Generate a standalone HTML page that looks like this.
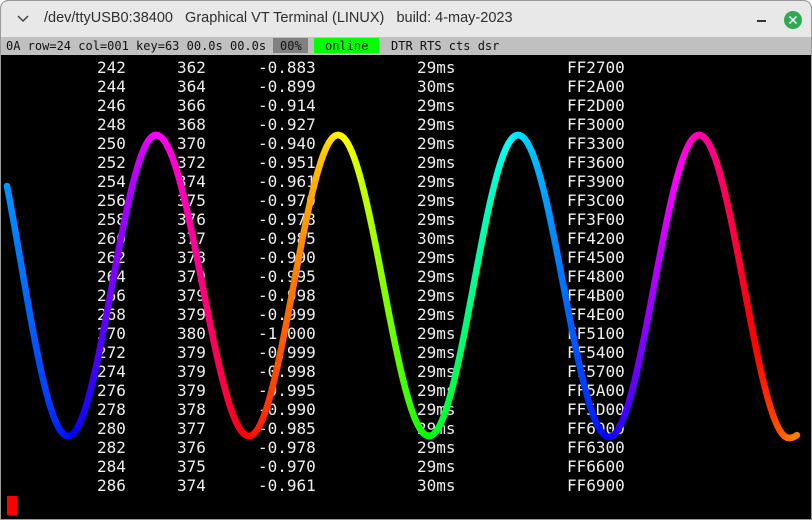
<!DOCTYPE html>
<html><head><style>
*{margin:0;padding:0;box-sizing:border-box}
body{width:812px;height:520px;overflow:hidden;background:#fff;position:relative;font-family:"Liberation Sans",sans-serif}
#win{position:absolute;left:0;top:0;width:812px;height:520px;border:1px solid #9a9a9a;border-radius:8px 8px 0 0;overflow:hidden;background:#000}
#title{position:absolute;left:0;top:0;width:812px;height:36px;background:#e8e8e8}
#title .t{position:absolute;left:43px;top:9px;font-size:14.5px;color:#2e2e2e;white-space:pre}
#status{position:absolute;left:0;top:36px;width:812px;height:18px;background:#c0c0c0;font:12px "DejaVu Sans Mono",monospace;color:#111;white-space:pre}
#status span{position:absolute;top:2px}
#term{position:absolute;left:0;top:54px;width:812px;height:466px;background:#000}
.row{position:absolute;left:0;height:19px;font:16px "DejaVu Sans Mono",monospace;color:#eee;white-space:pre;margin-top:-1px}
.row span{position:absolute;top:0}
</style></head><body>
<div id="win">
<div id="title">
<svg style="position:absolute;left:16px;top:14px" width="12" height="8"><path d="M1 1 L6 6 L11 1" stroke="#444" stroke-width="1.5" fill="none"/></svg>
<div class="t">/dev/ttyUSB0:38400   Graphical VT Terminal (LINUX)   build: 4-may-2023</div>
<div style="position:absolute;left:756px;top:19px;width:9px;height:2px;background:#333"></div>
<svg style="position:absolute;left:782px;top:9px" width="20" height="20"><circle cx="10" cy="10" r="9" fill="#2fa952"/><path d="M6.5 6.5L13.5 13.5M13.5 6.5L6.5 13.5" stroke="#fff" stroke-width="1.5"/></svg>
</div>
<div id="status">
<span style="left:5px">0A row=24 col=001 key=63 00.0s 00.0s</span>
<span style="left:272px;top:1px;width:35px;height:15px;background:#808080"></span>
<span style="left:279px">00%</span>
<span style="left:313px;top:1px;width:65px;height:15px;background:#00ff00"></span>
<span style="left:324px">online</span>
<span style="left:390px">DTR RTS cts dsr</span>
</div>
<div id="term">
<div class="row" style="top:4px"><span style="left:96px">242</span><span style="left:176px">362</span><span style="left:257px">-0.883</span><span style="left:416px">29ms</span><span style="left:566px">FF2700</span></div>
<div class="row" style="top:23px"><span style="left:96px">244</span><span style="left:176px">364</span><span style="left:257px">-0.899</span><span style="left:416px">30ms</span><span style="left:566px">FF2A00</span></div>
<div class="row" style="top:42px"><span style="left:96px">246</span><span style="left:176px">366</span><span style="left:257px">-0.914</span><span style="left:416px">29ms</span><span style="left:566px">FF2D00</span></div>
<div class="row" style="top:61px"><span style="left:96px">248</span><span style="left:176px">368</span><span style="left:257px">-0.927</span><span style="left:416px">29ms</span><span style="left:566px">FF3000</span></div>
<div class="row" style="top:80px"><span style="left:96px">250</span><span style="left:176px">370</span><span style="left:257px">-0.940</span><span style="left:416px">29ms</span><span style="left:566px">FF3300</span></div>
<div class="row" style="top:99px"><span style="left:96px">252</span><span style="left:176px">372</span><span style="left:257px">-0.951</span><span style="left:416px">29ms</span><span style="left:566px">FF3600</span></div>
<div class="row" style="top:118px"><span style="left:96px">254</span><span style="left:176px">374</span><span style="left:257px">-0.961</span><span style="left:416px">29ms</span><span style="left:566px">FF3900</span></div>
<div class="row" style="top:137px"><span style="left:96px">256</span><span style="left:176px">375</span><span style="left:257px">-0.970</span><span style="left:416px">29ms</span><span style="left:566px">FF3C00</span></div>
<div class="row" style="top:156px"><span style="left:96px">258</span><span style="left:176px">376</span><span style="left:257px">-0.978</span><span style="left:416px">29ms</span><span style="left:566px">FF3F00</span></div>
<div class="row" style="top:175px"><span style="left:96px">260</span><span style="left:176px">377</span><span style="left:257px">-0.985</span><span style="left:416px">30ms</span><span style="left:566px">FF4200</span></div>
<div class="row" style="top:194px"><span style="left:96px">262</span><span style="left:176px">378</span><span style="left:257px">-0.990</span><span style="left:416px">29ms</span><span style="left:566px">FF4500</span></div>
<div class="row" style="top:213px"><span style="left:96px">264</span><span style="left:176px">379</span><span style="left:257px">-0.995</span><span style="left:416px">29ms</span><span style="left:566px">FF4800</span></div>
<div class="row" style="top:232px"><span style="left:96px">266</span><span style="left:176px">379</span><span style="left:257px">-0.998</span><span style="left:416px">29ms</span><span style="left:566px">FF4B00</span></div>
<div class="row" style="top:251px"><span style="left:96px">268</span><span style="left:176px">379</span><span style="left:257px">-0.999</span><span style="left:416px">29ms</span><span style="left:566px">FF4E00</span></div>
<div class="row" style="top:270px"><span style="left:96px">270</span><span style="left:176px">380</span><span style="left:257px">-1.000</span><span style="left:416px">29ms</span><span style="left:566px">FF5100</span></div>
<div class="row" style="top:289px"><span style="left:96px">272</span><span style="left:176px">379</span><span style="left:257px">-0.999</span><span style="left:416px">29ms</span><span style="left:566px">FF5400</span></div>
<div class="row" style="top:308px"><span style="left:96px">274</span><span style="left:176px">379</span><span style="left:257px">-0.998</span><span style="left:416px">29ms</span><span style="left:566px">FF5700</span></div>
<div class="row" style="top:327px"><span style="left:96px">276</span><span style="left:176px">379</span><span style="left:257px">-0.995</span><span style="left:416px">29ms</span><span style="left:566px">FF5A00</span></div>
<div class="row" style="top:346px"><span style="left:96px">278</span><span style="left:176px">378</span><span style="left:257px">-0.990</span><span style="left:416px">29ms</span><span style="left:566px">FF5D00</span></div>
<div class="row" style="top:365px"><span style="left:96px">280</span><span style="left:176px">377</span><span style="left:257px">-0.985</span><span style="left:416px">29ms</span><span style="left:566px">FF6000</span></div>
<div class="row" style="top:384px"><span style="left:96px">282</span><span style="left:176px">376</span><span style="left:257px">-0.978</span><span style="left:416px">29ms</span><span style="left:566px">FF6300</span></div>
<div class="row" style="top:403px"><span style="left:96px">284</span><span style="left:176px">375</span><span style="left:257px">-0.970</span><span style="left:416px">29ms</span><span style="left:566px">FF6600</span></div>
<div class="row" style="top:422px"><span style="left:96px">286</span><span style="left:176px">374</span><span style="left:257px">-0.961</span><span style="left:416px">30ms</span><span style="left:566px">FF6900</span></div>
<div style="position:absolute;left:6px;top:441px;width:10px;height:19px;background:#f00"></div>
</div>
<svg id="wave" style="position:absolute;left:0;top:0" width="812" height="520"></svg>
</div>
<script>
var s=document.getElementById('wave'),h='';
var pts=[[6,185],[67,435],[155,134],[248,435],[337,134],[428,435],[517,134],[608,436],[698,134],[788,437]];
var hues=[205,235,298,360,415,480,545,600,678,745];
var k0=(1-Math.cos(Math.PI*0.35))/2;
function yAt(x){for(var i=0;i<pts.length-1;i++){var a=pts[i],b=pts[i+1];if(x<=b[0]){var t=(x-a[0])/(b[0]-a[0]);var c=(1-Math.cos(Math.PI*t))/2;if(i==0){c=((1-Math.cos(Math.PI*(0.35+0.65*t)))/2-k0)/(1-k0);}return [a[1]+(b[1]-a[1])*c,hues[i]+(hues[i+1]-hues[i])*t];}}
var t=(x-788)/90;return [437-150*(1-Math.cos(Math.PI*t))/2,745+(x-788)*0.5];}
var prev=yAt(6);
for(var x=7;x<=796;x++){var c=yAt(x);h+='<line x1="'+(x-1)+'" y1="'+prev[0].toFixed(1)+'" x2="'+x+'" y2="'+c[0].toFixed(1)+'" stroke="hsl('+(c[1]%360).toFixed(0)+',100%,50%)" stroke-width="6.5" stroke-linecap="round"/>';prev=c;}
s.innerHTML=h;
</script>
</body></html>
